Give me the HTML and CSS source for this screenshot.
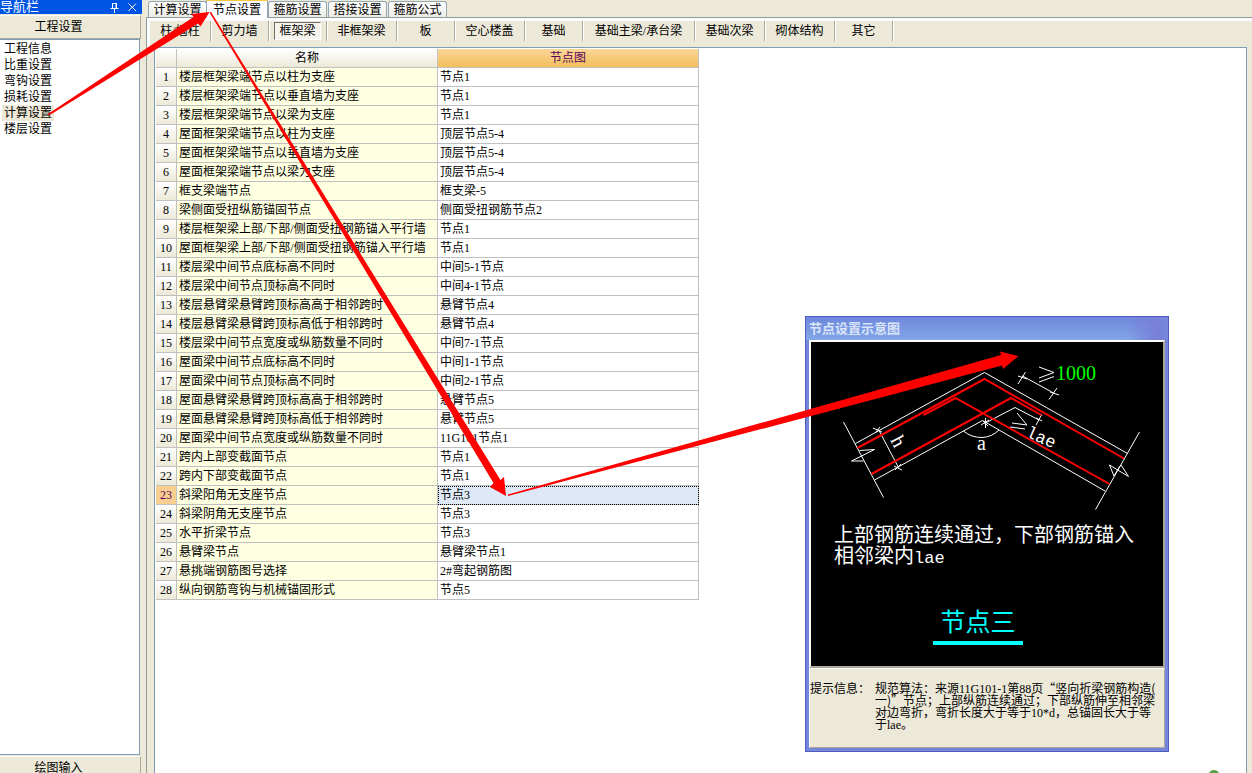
FILE: index.html
```html
<!DOCTYPE html>
<html lang="zh-CN">
<head>
<meta charset="utf-8">
<title>工程设置</title>
<link rel="stylesheet" href="styles.css">
</head>
<body>
<div class="app">
  <aside class="sidebar">
    <div class="sidebar-title">
      <span class="sidebar-name">导航栏</span>
      <button class="caption-button" aria-label="固定"><svg width="9" height="11" viewBox="0 0 9 11"><path d="M2.5 6V1.5H6V6M6.5 1V6M0.500 6.500H8.500M4.500 7V11" fill="none" stroke="#fff"/></svg></button>
      <button class="caption-button" aria-label="关闭"><svg width="9" height="9" viewBox="0 0 9 9"><path d="M0.500 0.500L8 8M8 0.500L0.500 8" fill="none" stroke="#fff"/></svg></button>
    </div>
    <button class="section-button">工程设置</button>
    <ul class="nav-list">
      <li><button class="nav-item">工程信息</button></li>
      <li><button class="nav-item">比重设置</button></li>
      <li><button class="nav-item">弯钩设置</button></li>
      <li><button class="nav-item">损耗设置</button></li>
      <li><button class="nav-item selected">计算设置</button></li>
      <li><button class="nav-item">楼层设置</button></li>
    </ul>
    <button class="section-button bottom">绘图输入</button>
  </aside>
  <main class="main">
    <div class="tabs">
      <button class="tab">计算设置</button>
      <button class="tab active">节点设置</button>
      <button class="tab">箍筋设置</button>
      <button class="tab">搭接设置</button>
      <button class="tab">箍筋公式</button>
    </div>
    <div class="page">
      <div class="toolbar">
        <div class="tool medium"><button>柱/墙柱</button></div>
        <div class="tool"><button>剪力墙</button></div>
        <div class="tool"><button class="pressed">框架梁</button></div>
        <div class="tool wide"><button>非框架梁</button></div>
        <div class="tool"><button>板</button></div>
        <div class="tool wide"><button>空心楼盖</button></div>
        <div class="tool"><button>基础</button></div>
        <div class="tool widest"><button>基础主梁/承台梁</button></div>
        <div class="tool wide"><button>基础次梁</button></div>
        <div class="tool wide"><button>砌体结构</button></div>
        <div class="tool"><button>其它</button></div>
      </div>
      <div class="sheet">
        <table class="grid">
          <colgroup><col class="col-number"><col class="col-name"><col class="col-node"></colgroup>
          <thead><tr><th></th><th>名称</th><th class="current">节点图</th></tr></thead>
          <tbody>
            <tr><th>1</th><td>楼层框架梁端节点以柱为支座</td><td>节点1</td></tr>
            <tr><th>2</th><td>楼层框架梁端节点以垂直墙为支座</td><td>节点1</td></tr>
            <tr><th>3</th><td>楼层框架梁端节点以梁为支座</td><td>节点1</td></tr>
            <tr><th>4</th><td>屋面框架梁端节点以柱为支座</td><td>顶层节点5-4</td></tr>
            <tr><th>5</th><td>屋面框架梁端节点以垂直墙为支座</td><td>顶层节点5-4</td></tr>
            <tr><th>6</th><td>屋面框架梁端节点以梁为支座</td><td>顶层节点5-4</td></tr>
            <tr><th>7</th><td>框支梁端节点</td><td>框支梁-5</td></tr>
            <tr><th>8</th><td>梁侧面受扭纵筋锚固节点</td><td>侧面受扭钢筋节点2</td></tr>
            <tr><th>9</th><td>楼层框架梁上部/下部/侧面受扭钢筋锚入平行墙</td><td>节点1</td></tr>
            <tr><th>10</th><td>屋面框架梁上部/下部/侧面受扭钢筋锚入平行墙</td><td>节点1</td></tr>
            <tr><th>11</th><td>楼层梁中间节点底标高不同时</td><td>中间5-1节点</td></tr>
            <tr><th>12</th><td>楼层梁中间节点顶标高不同时</td><td>中间4-1节点</td></tr>
            <tr><th>13</th><td>楼层悬臂梁悬臂跨顶标高高于相邻跨时</td><td>悬臂节点4</td></tr>
            <tr><th>14</th><td>楼层悬臂梁悬臂跨顶标高低于相邻跨时</td><td>悬臂节点4</td></tr>
            <tr><th>15</th><td>楼层梁中间节点宽度或纵筋数量不同时</td><td>中间7-1节点</td></tr>
            <tr><th>16</th><td>屋面梁中间节点底标高不同时</td><td>中间1-1节点</td></tr>
            <tr><th>17</th><td>屋面梁中间节点顶标高不同时</td><td>中间2-1节点</td></tr>
            <tr><th>18</th><td>屋面悬臂梁悬臂跨顶标高高于相邻跨时</td><td>悬臂节点5</td></tr>
            <tr><th>19</th><td>屋面悬臂梁悬臂跨顶标高低于相邻跨时</td><td>悬臂节点5</td></tr>
            <tr><th>20</th><td>屋面梁中间节点宽度或纵筋数量不同时</td><td>11G101节点1</td></tr>
            <tr><th>21</th><td>跨内上部变截面节点</td><td>节点1</td></tr>
            <tr><th>22</th><td>跨内下部变截面节点</td><td>节点1</td></tr>
            <tr class="current-row"><th>23</th><td>斜梁阳角无支座节点</td><td class="focused">节点3</td></tr>
            <tr><th>24</th><td>斜梁阴角无支座节点</td><td>节点3</td></tr>
            <tr><th>25</th><td>水平折梁节点</td><td>节点3</td></tr>
            <tr><th>26</th><td>悬臂梁节点</td><td>悬臂梁节点1</td></tr>
            <tr><th>27</th><td>悬挑端钢筋图号选择</td><td>2#弯起钢筋图</td></tr>
            <tr><th>28</th><td>纵向钢筋弯钩与机械锚固形式</td><td>节点5</td></tr>
          </tbody>
        </table>
      </div>
    </div>
  </main>
</div>

<section class="dialog" aria-label="节点设置示意图">
  <h2 class="dialog-title">节点设置示意图</h2>
  <div class="drawing">
    <svg class="diagram" viewBox="811 342 352 176">
      <g fill="none" stroke="#fff" stroke-width="1">
        <path d="M855.500 443.500L984.500 372.500L1127.500 453.500"/>
        <path d="M874.500 480L982.500 420.500L1105 491"/>
        <path d="M984.500 423.500L1015 407.500L1039 420"/>
        <path d="M843.500 422L883.500 497.500M1139.500 432L1095.500 509.500"/>
        <path d="M859.500 450.500L874.500 449.500L851.500 461H863.500"/>
        <path d="M1121 465L1128.500 476.500L1109.500 465L1114 476L1120 466"/>
        <path d="M878.500 429.500L898.500 467.500M873 428L882 432M875 433L880 427M894 466L902 470M895 470L901 464"/>
        <path d="M963.500 431Q971 437.500 982 437.500Q992 437 999 430"/>
        <path d="M981 425L989 420M983 421L988 426M985.500 418V428"/>
        <path d="M1022.500 376L1054.500 393.500M1018 384L1025.500 372M1018 376L1027 379M1049 399.500L1057 388M1050 392L1059 395M1036 425L1042 414M1036 418L1042 421"/>
      </g>
      <g fill="none" stroke="#f00" stroke-width="2">
        <path d="M857.500 448L984.500 379L1124 458.500"/>
        <path d="M871.500 474L1011 398L1041.500 415"/>
        <path d="M1109.500 484L955.500 398L923.500 415"/>
      </g>
      <g fill="none" stroke="#fff">
        <path d="M1039 367L1054 372.500L1039 378M1039 382L1054 376.500"/>
        <path d="M1017 413L1027 425L1012 423M1010 427L1025 429"/>
      </g>
      <g class="diagram-text">
        <text class="green" x="1056" y="380">1000</text>
        <text x="977" y="450">a</text>
        <text transform="translate(890 440) rotate(62)">h</text>
        <text class="mono" transform="translate(1025 436) rotate(24)">lae</text>
      </g>
    </svg>
    <p class="drawing-note">上部钢筋连续通过，下部钢筋锚入<br>相邻梁内<span class="mono">lae</span></p>
    <p class="drawing-name">节点三</p>
  </div>
  <div class="hint">
    <span class="hint-label">提示信息：</span>
    <p class="hint-text">规范算法：来源<span class="latin">11G101-1</span>第<span class="latin">88</span>页“竖向折梁钢筋构造(<br>一)”节点；上部纵筋连续通过；下部纵筋伸至相邻梁<br>对边弯折，弯折长度大于等于<span class="latin">10*d</span>，总锚固长大于等<br>于<span class="latin">lae</span>。</p>
  </div>
</section>

<svg class="arrows" width="1252" height="773" viewBox="0 0 1252 773" fill="#f00" aria-hidden="true">
  <path d="M48 114L193.500 17L191.500 14L209.500 12L200.500 26.500L198 23.500L49 115.500Z"/>
  <path d="M211 12L500.500 480L504 477L506 496L490 487L493.500 483L209.500 12.500Z"/>
  <path d="M508 494.500L1001 355L1000 351.500L1018.500 356L1003 369L1002 365.500L508 496Z"/>
  <ellipse cx="1214" cy="774" rx="5" ry="4" fill="#5ba043"/>
</svg>
</body>
</html>
```

FILE: styles.css
```css
* { box-sizing: border-box; }

body {
  margin: 0;
  height: 100vh;
  overflow: hidden;
  background: #ece9d8;
  color: #000;
  font: 12px/16px "Liberation Serif", "Noto Sans CJK SC", sans-serif;
}

button {
  margin: 0;
  padding: 0;
  border: 0;
  background: none;
  color: inherit;
  font: inherit;
  white-space: nowrap;
}

.app {
  display: grid;
  grid-template-columns: 142px 1fr;
  column-gap: 4px;
  height: 100vh;
}

.sidebar {
  display: flex;
  flex-direction: column;
  min-height: 0;
}

.sidebar-title {
  display: flex;
  align-items: center;
  gap: 9px;
  height: 14px;
  padding-right: 5px;
  background: #0054e3;
  color: #fff;
  font-size: 13px;
  line-height: 14px;
}

.sidebar-name { flex: 1; }

.caption-button {
  display: flex;
  width: 9px;
}

.section-button {
  height: 24px;
  margin: 1px 1px 0 0;
  padding-right: 23px;
  border: solid;
  border-width: 1px 1px 1px 0;
  border-color: #fff #aca899 #aca899 #fff;
}

.section-button.bottom {
  flex: none;
  margin-bottom: -7px;
}

.nav-list {
  flex: 1;
  min-height: 0;
  margin: 0 2px 0 0;
  padding: 1px 0 0 2px;
  border: 1px solid #7f9db9;
  border-left: 0;
  background: #fff;
  list-style: none;
}

.nav-list li { display: flex; }

.nav-item {
  height: 16px;
  padding: 0 2px;
}

.nav-item.selected { background: #ece9d8; }

.main {
  display: flex;
  flex-direction: column;
  min-width: 0;
}

.tabs {
  display: flex;
  align-items: flex-end;
  height: 18px;
  padding-left: 2px;
  border-bottom: 1px solid #919b9c;
}

.tab {
  width: 59px;
  height: 16px;
  margin-right: 1px;
  border: 1px solid #91a7b4;
  border-bottom: 0;
  border-radius: 3px 3px 0 0;
  background: linear-gradient(#fff, #ecebe5);
}

.tab.active {
  width: 62px;
  height: 18px;
  margin: 0 0 -1px -2px;
  border-top: 1px solid #ffc73c;
  border-radius: 0;
  background: #fcfcfe;
}

.page {
  display: flex;
  flex: 1;
  flex-direction: column;
  min-height: 0;
  padding-right: 5px;
  border-left: 1px solid #919b9c;
}

.toolbar {
  display: flex;
  height: 29px;
  margin-right: -5px;
  padding-bottom: 6px;
  border-top: 3px solid #fcfcfe;
  border-left: 3px solid #fcfcfe;
}

.tool {
  display: flex;
  width: 58px;
  height: 20px;
  padding: 1px 5px;
  border-right: 1px solid #aca899;
  box-shadow: 1px 0 #fff;
}

.tool.medium { width: 61px; }
.tool.wide { width: 70px; }
.tool.widest { width: 112px; }

.tool button { flex: 1; }

.tool .pressed {
  border: 1px solid;
  border-color: #716f64 #fff #fff #716f64;
  background: #f6f4ec;
  line-height: 14px;
}

.sheet {
  flex: 1;
  margin-left: 7px;
  padding: 1px;
  border: 1px solid #7f9db9;
  border-bottom: 0;
  background: #fff;
}

.grid {
  width: 543px;
  border-spacing: 0;
  table-layout: fixed;
}

.col-number { width: 21px; }
.col-name { width: 261px; }
.col-node { width: 261px; }

.grid th,
.grid td {
  height: 19px;
  padding: 0 2px;
  border-right: 1px solid #c0c0c0;
  border-bottom: 1px solid #c0c0c0;
  text-align: left;
  font-weight: normal;
  line-height: 18px;
  white-space: nowrap;
}

.grid th {
  padding: 0;
  background: linear-gradient(#fff, #ece9d8);
  text-align: center;
}

.grid th.current {
  background: linear-gradient(#f9d69a, #f2bf5b);
  color: #5a005a;
}

.grid .current-row th {
  background: #f8cf91;
  color: #5a005a;
}

.grid td:nth-child(2) { background: #ffffe1; }

.grid td.focused {
  background: #dfe8f6;
  outline: 1px dotted #000;
  outline-offset: -1px;
}

/* Floating preview window */
.dialog {
  position: absolute;
  top: 316px;
  left: 805px;
  width: 364px;
  padding: 0 3px 3px;
  border: 1px solid #4f5cc0;
  background: #7587dc;
}

.dialog-title {
  height: 23px;
  margin: 0 -3px;
  padding-left: 3px;
  background: linear-gradient(90deg, transparent 88%, #7880d8 97%, #7587dc), linear-gradient(#6f87dc, #7b9ae2 60%, #82a8ea);
  color: #d8e4f8;
  font-size: 13px;
  font-weight: bold;
  line-height: 24px;
}

.drawing {
  height: 328px;
  border: 2px solid;
  border-color: #fff #aca899 #aca899 #fff;
  background: #000;
  color: #fff;
}

.diagram {
  display: block;
  width: 100%;
}

.diagram-text {
  fill: #fff;
  font-size: 20px;
}

.diagram-text .green { fill: #0f0; }

.mono {
  font-family: "Liberation Mono", monospace;
  font-size: 17px;
  line-height: 0;
}

.drawing-note {
  margin: 7px 0 0 23px;
  font-size: 20px;
  line-height: 21px;
}

.drawing-name {
  width: 90px;
  margin: 38px auto 0 122px;
  border-bottom: 4px solid #0ff;
  color: #0ff;
  font-size: 25px;
  line-height: 36px;
  text-align: center;
}

.hint {
  display: flex;
  gap: 4px;
  height: 80px;
  padding-top: 13px;
  border: 1px solid;
  border-color: #fff #aca899 #aca899 #fff;
  background: #ece9d8;
  font-family: "Noto Sans CJK SC", sans-serif;
  line-height: 12px;
}

.hint-label {
  flex: none;
  width: 61px;
  white-space: nowrap;
}

.hint-text {
  margin: 0;
  white-space: nowrap;
}

.latin {
  font-family: "Liberation Serif", serif;
  line-height: 0;
}

/* Callouts drawn over the whole window */
.arrows {
  position: absolute;
  top: 0;
  left: 0;
  pointer-events: none;
}
```
